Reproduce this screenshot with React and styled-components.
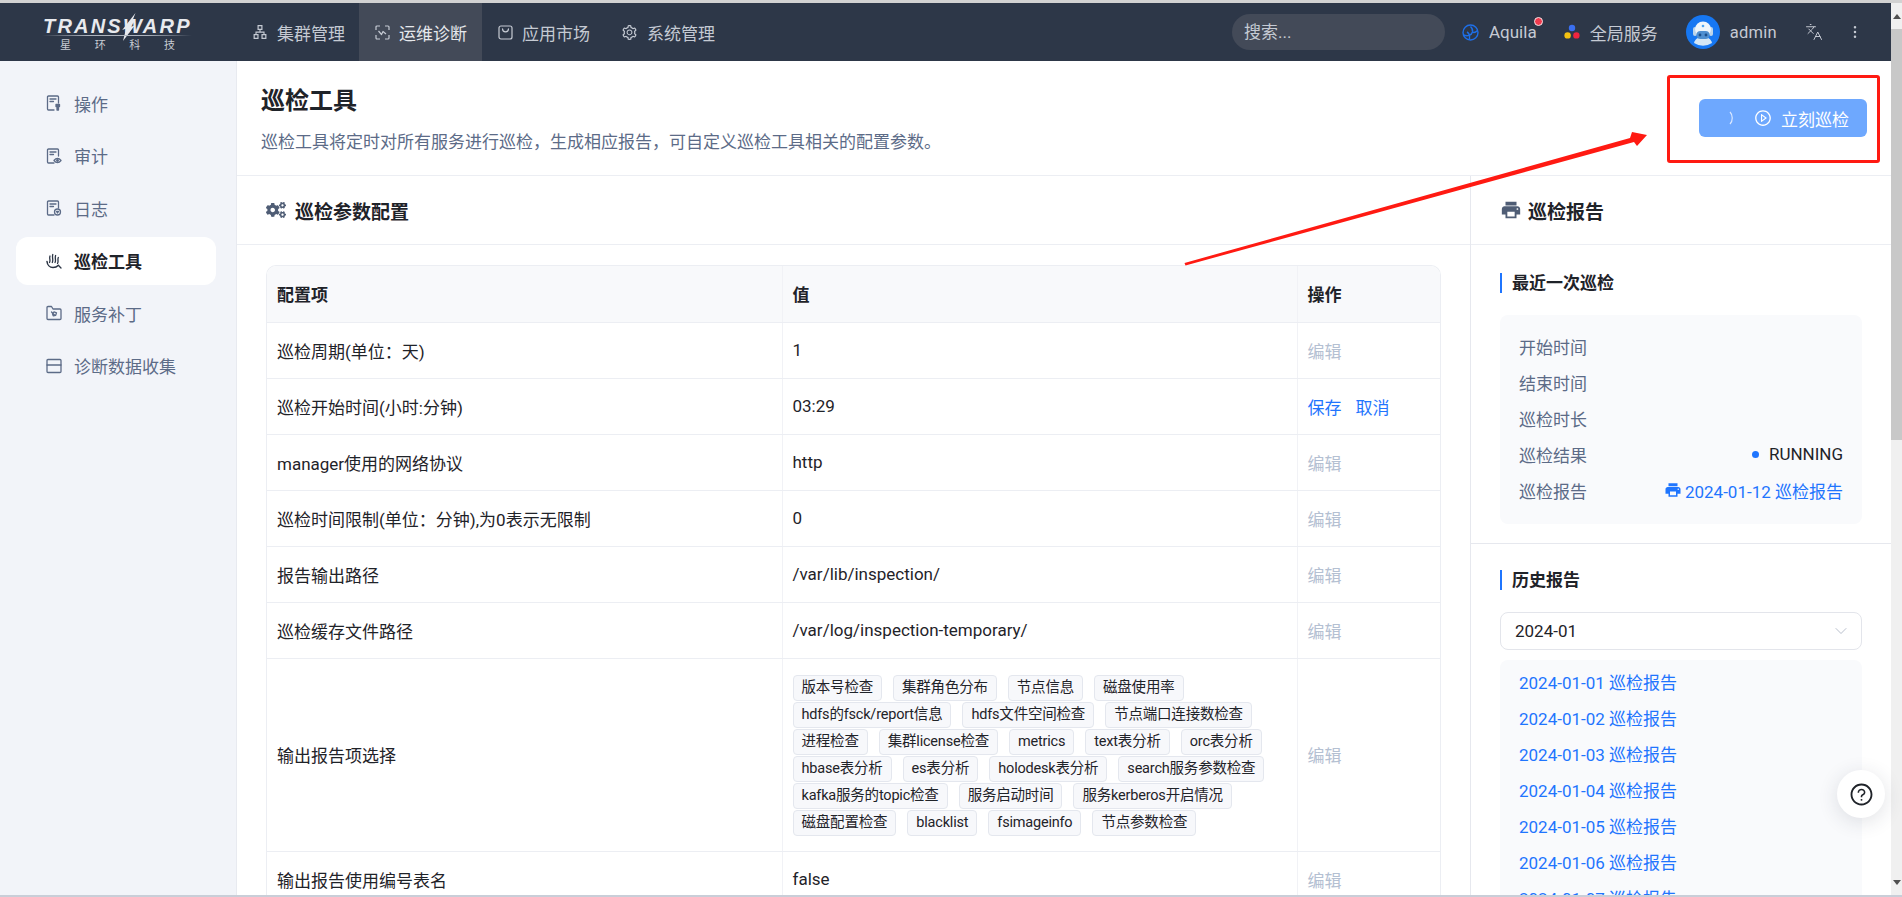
import styled, { createGlobalStyle } from 'styled-components';
import { AiOutlineApartment, AiOutlineSetting, AiOutlinePlayCircle, AiOutlineQuestionCircle } from 'react-icons/ai';
import { FaCogs } from 'react-icons/fa';
import { MdLocalPrintshop } from 'react-icons/md';
import { ChevronDown, Languages, EllipsisVertical } from 'lucide-react';

const BLUE = '#1f75fe';

const GlobalStyle = createGlobalStyle`
    html, body {
        margin: 0;
        padding: 0;
        height: 897px;
        overflow: hidden;
        background: #fff;
    }
    * {
        box-sizing: border-box;
    }
    body {
        font-family: Roboto, "Noto Sans CJK SC", sans-serif;
        font-size: 17px;
        color: #1f2329;
    }
`;

const sideItems = [
    { label: '操作', icon: 'key' },
    { label: '审计', icon: 'eye' },
    { label: '日志', icon: 'shield' },
    { label: '巡检工具', icon: 'hand', active: true },
    { label: '服务补丁', icon: 'folder' },
    { label: '诊断数据收集', icon: 'box' },
];

const configRows = [
    { name: '巡检周期(单位：天)', value: '1' },
    { name: '巡检开始时间(小时:分钟)', value: '03:29', editing: true },
    { name: 'manager使用的网络协议', value: 'http' },
    { name: '巡检时间限制(单位：分钟),为0表示无限制', value: '0' },
    { name: '报告输出路径', value: '/var/lib/inspection/' },
    { name: '巡检缓存文件路径', value: '/var/log/inspection-temporary/' },
    {
        name: '输出报告项选择',
        tags: [
            '版本号检查', '集群角色分布', '节点信息', '磁盘使用率',
            'hdfs的fsck/report信息', 'hdfs文件空间检查', '节点端口连接数检查',
            '进程检查', '集群license检查', 'metrics', 'text表分析', 'orc表分析',
            'hbase表分析', 'es表分析', 'holodesk表分析', 'search服务参数检查',
            'kafka服务的topic检查', '服务启动时间', '服务kerberos开启情况',
            '磁盘配置检查', 'blacklist', 'fsimageinfo', '节点参数检查',
        ],
    },
    { name: '输出报告使用编号表名', value: 'false' },
];

const lastRun = [
    { label: '开始时间' },
    { label: '结束时间' },
    { label: '巡检时长' },
    { label: '巡检结果', status: 'RUNNING' },
    { label: '巡检报告', link: '2024-01-12 巡检报告' },
];

const history = ['01', '02', '03', '04', '05', '06', '07'];

const SideIcon = ({ type, color }) => {
    const common = { fill: 'none', stroke: color, strokeWidth: 1.3, strokeLinecap: 'round', strokeLinejoin: 'round' };
    if (type === 'hand') {
        return (
            <svg width="16" height="16" viewBox="0 0 16 16" {...common}>
                <path d="M1 8.500c.3 3.500 2.800 6 6 6 2.200 0 4-.8 5.500-2.300" strokeWidth="1.500" />
                <path d="M3.500 9.500C4.800 7 3 5.500 4 3M6.300 9.500C7.600 6.500 5.800 4.500 6.800 1.500M9 9.500C10.300 7 8.600 5 9.600 2.500M11.500 10.500C12.800 8.500 11.300 6.500 12.300 4.500" />
                <path d="M13 13l2 2" />
            </svg>
        );
    }
    if (type === 'folder') {
        return (
            <svg width="16" height="16" viewBox="0 0 16 16" {...common}>
                <path d="M1 2.500a1 1 0 0 1 1-1h3.500L7 4h7a1 1 0 0 1 1 1v8.500a1 1 0 0 1-1 1H2a1 1 0 0 1-1-1z" />
                <path d="M5.500 7l3.500 3.500M8 6.800l2.500 1-.8 2.500-2.500.5-.7-2z" />
            </svg>
        );
    }
    if (type === 'box') {
        return (
            <svg width="16" height="16" viewBox="0 0 16 16" {...common}>
                <path d="M1 7h14v6.500a1 1 0 0 1-1 1H2a1 1 0 0 1-1-1z" />
                <path d="M1 7V2.500a1 1 0 0 1 1-1h12a1 1 0 0 1 1 1V7" />
            </svg>
        );
    }
    return (
        <svg width="16" height="16" viewBox="0 0 16 16" {...common}>
            <path d="M8 15H2.500A1 1 0 0 1 1.500 14V2a1 1 0 0 1 1-1h9a1 1 0 0 1 1 1v6" />
            <path d="M4 4h6M4 6.500h3.500" />
            {type === 'key' && <path d="M10 9.500h3.500v2h-1v3.500h-1.500v-3.500h-1z" fill={color} />}
            {type === 'eye' && (
                <>
                    <path d="M8 12.500c1.200-1.600 2.400-2.200 3.500-2.200s2.300.6 3.500 2.200c-1.200 1.600-2.400 2.200-3.500 2.200S9.200 14.100 8 12.500z" />
                    <circle cx="11.500" cy="12.500" r="0.800" fill={color} />
                </>
            )}
            {type === 'shield' && (
                <>
                    <circle cx="11.500" cy="12" r="3" />
                    <path d="M10.500 11.500h2l-1 1.500z" />
                </>
            )}
        </svg>
    );
};

const DiagnoseIcon = () => (
    <svg width="15" height="15" viewBox="0 0 15 15" fill="none" stroke="#c5cad3" strokeWidth="1.200" strokeLinejoin="round">
        <path d="M1 5V2a1 1 0 0 1 1-1h3M10 1h3a1 1 0 0 1 1 1v3M14 10v3a1 1 0 0 1-1 1h-3M5 14H2a1 1 0 0 1-1-1v-3" />
        <path d="M3.500 6l3 3.500 1.500-3 3 2.500" />
    </svg>
);

const MarketIcon = () => (
    <svg width="15" height="15" viewBox="0 0 15 15" fill="none" stroke="#c5cad3" strokeWidth="1.200" strokeLinecap="round">
        <rect x="1" y="1" width="13" height="13" rx="2" />
        <path d="M4.500 3.800c0 4 6 4 6 0" />
    </svg>
);

const AquilaIcon = () => (
    <svg width="17" height="17" viewBox="0 0 17 17" fill="none" stroke="#1e6fe8" strokeWidth="1.400">
        <circle cx="8.500" cy="8.500" r="7.500" />
        <path d="M1.500 11c4 1.500 8 .5 9-3 .5-2-.5-4-2-5.500" />
        <path d="M5 8c2 1 3 3 2.500 7M10.500 8c1.500 1 3.500 0 5-1.500" />
    </svg>
);

const ServiceDots = () => (
    <svg width="16" height="16" viewBox="0 0 16 16">
        <circle cx="8" cy="4" r="3.200" fill="#3a6ff0" />
        <circle cx="3.600" cy="11.400" r="3.200" fill="#f5c211" />
        <circle cx="12.400" cy="11.400" r="3.200" fill="#f0243f" />
    </svg>
);

const RobotAvatar = () => (
    <svg width="34" height="34" viewBox="0 0 34 34">
        <circle cx="17" cy="17" r="17" fill="#1677f2" />
        <path d="M8 28c1-4 4-6 9-6s8 2 9 6a17 17 0 0 1-18 0z" fill="#d4e6f5" />
        <rect x="7" y="12" width="4" height="9" rx="2" fill="#bcd5ea" />
        <rect x="23" y="12" width="4" height="9" rx="2" fill="#bcd5ea" />
        <ellipse cx="17" cy="14" rx="8" ry="7.500" fill="#eef5fb" />
        <rect x="10.500" y="16" width="13" height="8" rx="4" fill="#4f8fd0" />
        <circle cx="14" cy="20" r="1.400" fill="#1c4f8c" />
        <circle cx="20" cy="20" r="1.400" fill="#1c4f8c" />
        <circle cx="17" cy="11" r="1.300" fill="#4aa3f0" />
    </svg>
);

const App = () => (
    <Root>
        <GlobalStyle />
        <TopEdge />
        <Frame>
            <Page>
                <Header>
                    <Logo>
                        <LogoWord>TRANSWARP</LogoWord>
                        <LogoBolt viewBox="0 0 24 36" width="20" height="28">
                            <path d="M19 0L12 18l6-2L3 36l4-16-5 2z" fill="#e8eaee" />
                        </LogoBolt>
                        <LogoLine />
                        <LogoCn>
                            <span>星</span>
                            <span>环</span>
                            <span>科</span>
                            <span>技</span>
                        </LogoCn>
                    </Logo>
                    <NavList>
                        <NavItem>
                            <AiOutlineApartment size={16} />
                            集群管理
                        </NavItem>
                        <NavItem $active>
                            <DiagnoseIcon />
                            运维诊断
                        </NavItem>
                        <NavItem>
                            <MarketIcon />
                            应用市场
                        </NavItem>
                        <NavItem>
                            <AiOutlineSetting size={17} />
                            系统管理
                        </NavItem>
                    </NavList>
                    <HeaderRight>
                        <SearchBox>搜索...</SearchBox>
                        <HeaderLink $ml={17}>
                            <AquilaIcon />
                            <BadgeWrap>
                                Aquila
                                <RedDot />
                            </BadgeWrap>
                        </HeaderLink>
                        <HeaderLink $ml={27}>
                            <ServiceDots />
                            全局服务
                        </HeaderLink>
                        <HeaderLink $ml={28}>
                            <RobotAvatar />
                            <UserName>admin</UserName>
                        </HeaderLink>
                        <IconSlot $ml={28}>
                            <Languages size={18} strokeWidth={1.300} />
                        </IconSlot>
                        <IconSlot $ml={24}>
                            <EllipsisVertical size={16} strokeWidth={1.800} />
                        </IconSlot>
                    </HeaderRight>
                </Header>
                <Body>
                    <Sidebar>
                        {sideItems.map((item) => (
                            <SideItem key={item.label} $active={item.active}>
                                <SideIcon type={item.icon} color={item.active ? '#2b3444' : '#5c6b87'} />
                                {item.label}
                            </SideItem>
                        ))}
                    </Sidebar>
                    <Main>
                        <TitleBar>
                            <TitleText>
                                <PageTitle>巡检工具</PageTitle>
                                <PageDesc>巡检工具将定时对所有服务进行巡检，生成相应报告，可自定义巡检工具相关的配置参数。</PageDesc>
                            </TitleText>
                            <RunButton>
                                <svg width="8" height="14" viewBox="0 0 8 14" fill="none" stroke="#dbe8ff" strokeWidth="1.200">
                                    <path d="M2 1c3 3 3 9 0 12" />
                                </svg>
                                <AiOutlinePlayCircle size={18} />
                                立刻巡检
                            </RunButton>
                        </TitleBar>
                        <Columns>
                            <LeftCol>
                                <PanelHead $pad={29} $gap={9}>
                                    <FaCogs size={20} color="#4f5d75" />
                                    巡检参数配置
                                </PanelHead>
                                <TableArea>
                                    <TableBox>
                                        <ConfigTable>
                                            <colgroup>
                                                <col width="515" />
                                                <col width="515" />
                                                <col width="144" />
                                            </colgroup>
                                            <thead>
                                                <tr>
                                                    <th>配置项</th>
                                                    <th>值</th>
                                                    <th>操作</th>
                                                </tr>
                                            </thead>
                                            <tbody>
                                                {configRows.map((row) => (
                                                    <tr key={row.name}>
                                                        <td>{row.name}</td>
                                                        <td>
                                                            {row.tags ? (
                                                                <TagList>
                                                                    {row.tags.map((tag) => (
                                                                        <Tag key={tag}>{tag}</Tag>
                                                                    ))}
                                                                </TagList>
                                                            ) : (
                                                                row.value
                                                            )}
                                                        </td>
                                                        <td>
                                                            {row.editing ? (
                                                                <ActionRow>
                                                                    <LinkText>保存</LinkText>
                                                                    <LinkText>取消</LinkText>
                                                                </ActionRow>
                                                            ) : (
                                                                <DisabledText>编辑</DisabledText>
                                                            )}
                                                        </td>
                                                    </tr>
                                                ))}
                                            </tbody>
                                        </ConfigTable>
                                    </TableBox>
                                </TableArea>
                            </LeftCol>
                            <RightCol>
                                <PanelHead $pad={29} $gap={6}>
                                    <MdLocalPrintshop size={22} color="#4f5d75" />
                                    巡检报告
                                </PanelHead>
                                <ReportSection>
                                    <SectionTitle>最近一次巡检</SectionTitle>
                                    <InfoBox>
                                        {lastRun.map((row) => (
                                            <InfoRow key={row.label}>
                                                <InfoLabel>{row.label}</InfoLabel>
                                                {row.status && (
                                                    <StatusText>
                                                        <StatusDot />
                                                        {row.status}
                                                    </StatusText>
                                                )}
                                                {row.link && (
                                                    <ReportLink>
                                                        <MdLocalPrintshop size={18} />
                                                        {row.link}
                                                    </ReportLink>
                                                )}
                                            </InfoRow>
                                        ))}
                                    </InfoBox>
                                </ReportSection>
                                <HistorySection>
                                    <SectionTitle>历史报告</SectionTitle>
                                    <MonthSelect>
                                        2024-01
                                        <ChevronDown size={20} strokeWidth={1} color="#aab2c2" />
                                    </MonthSelect>
                                    <HistoryBox>
                                        {history.map((day) => (
                                            <HistoryRow key={day}>2024-01-{day} 巡检报告</HistoryRow>
                                        ))}
                                    </HistoryBox>
                                </HistorySection>
                            </RightCol>
                        </Columns>
                    </Main>
                </Body>
            </Page>
            <ScrollBar>
                <ScrollArrow $up />
                <ScrollThumb />
                <ScrollArrow />
            </ScrollBar>
        </Frame>
        <BottomEdge />
        <HelpButton>
            <AiOutlineQuestionCircle size={25} />
        </HelpButton>
        <RedBox />
        <ArrowLayer viewBox="0 0 1902 897" width="1902" height="897">
            <polygon points="1184.500,263 1630,138 1632,132 1647,135 1637,146 1634,142 1185.500,265.500" fill="#ff1a12" />
        </ArrowLayer>
    </Root>
);

export default App;

const Root = styled.div`
    position: relative;
    width: 1902px;
    height: 897px;
    overflow: hidden;
    display: flex;
    flex-direction: column;
`;

const TopEdge = styled.div`
    height: 3px;
    flex: none;
    background: #d2d2d2;
`;

const BottomEdge = styled.div`
    height: 2px;
    flex: none;
    background: #c9ced8;
`;

const Frame = styled.div`
    flex: 1;
    min-height: 0;
    display: flex;
`;

const Page = styled.div`
    width: 1891px;
    display: flex;
    flex-direction: column;
    overflow: hidden;
`;

const Header = styled.header`
    height: 58px;
    flex: none;
    display: flex;
    background: #2d3748;
    color: #c5cad3;
`;

const Logo = styled.div`
    position: relative;
    width: 236px;
    flex: none;
    color: #e8eaee;
`;

const LogoWord = styled.div`
    position: absolute;
    left: 43px;
    top: 11px;
    font-family: "Liberation Sans", sans-serif;
    font-size: 20px;
    line-height: 24px;
    font-weight: 700;
    font-style: italic;
    letter-spacing: 2.200px;
    white-space: nowrap;
`;

const LogoBolt = styled.svg`
    position: absolute;
    left: 120px;
    top: 10px;
`;

const LogoLine = styled.div`
    position: absolute;
    left: 42px;
    top: 32px;
    width: 150px;
    height: 1px;
    background: linear-gradient(90deg, transparent, #aeb4be 30%, #aeb4be 70%, transparent);
`;

const LogoCn = styled.div`
    position: absolute;
    left: 60px;
    top: 36px;
    width: 115px;
    display: flex;
    justify-content: space-between;
    font-size: 11px;
    line-height: 14px;
    color: #c8ccd3;
`;

const NavList = styled.nav`
    display: flex;
`;

const NavItem = styled.div`
    width: 123px;
    display: flex;
    align-items: center;
    gap: 9px;
    padding-left: 16px;
    background: ${(p) => (p.$active ? '#434a58' : 'transparent')};
    color: ${(p) => (p.$active ? '#e6e8ec' : '#c5cad3')};
    white-space: nowrap;
`;

const HeaderRight = styled.div`
    display: flex;
    align-items: center;
    margin-left: auto;
    width: 659px;
`;

const SearchBox = styled.div`
    width: 213px;
    height: 36px;
    border-radius: 18px;
    background: #434a58;
    padding-left: 12px;
    line-height: 36px;
    color: #c5cad3;
`;

const HeaderLink = styled.div`
    display: flex;
    align-items: center;
    gap: 10px;
    margin-left: ${(p) => p.$ml}px;
    white-space: nowrap;
`;

const BadgeWrap = styled.span`
    position: relative;
    font-size: 17px;
`;

const RedDot = styled.span`
    position: absolute;
    right: -6px;
    top: -5px;
    width: 9px;
    height: 9px;
    border-radius: 50%;
    background: #f03a4e;
    border: 1px solid #f5e6e8;
`;

const UserName = styled.span`
    font-size: 16.500px;
    letter-spacing: 0.300px;
`;

const IconSlot = styled.div`
    display: flex;
    margin-left: ${(p) => p.$ml}px;
`;

const Body = styled.div`
    flex: 1;
    min-height: 0;
    display: flex;
`;

const Sidebar = styled.aside`
    width: 237px;
    flex: none;
    padding: 18px 20px 0 16px;
    background: #f2f4f9;
    border-right: 1px solid #e8eaf0;
    display: flex;
    flex-direction: column;
    gap: 4.600px;
`;

const SideItem = styled.div`
    height: 48px;
    display: flex;
    align-items: center;
    gap: 12px;
    padding-left: 30px;
    border-radius: 12px;
    background: ${(p) => (p.$active ? '#fff' : 'transparent')};
    color: ${(p) => (p.$active ? '#1f2329' : '#5c6b87')};
    font-weight: ${(p) => (p.$active ? 700 : 400)};
`;

const Main = styled.main`
    flex: 1;
    min-width: 0;
    display: flex;
    flex-direction: column;
`;

const TitleBar = styled.div`
    height: 115px;
    flex: none;
    display: flex;
    align-items: center;
    justify-content: space-between;
    padding: 0 24px;
    border-bottom: 1px solid #eceef3;
`;

const TitleText = styled.div`
    padding-top: 3px;
`;

const PageTitle = styled.h1`
    margin: 0 0 12px;
    font-size: 24px;
    line-height: 32px;
    font-weight: 700;
`;

const PageDesc = styled.p`
    margin: 0;
    font-size: 17px;
    line-height: 26px;
    color: #5c6b87;
`;

const RunButton = styled.div`
    width: 168px;
    height: 38px;
    display: flex;
    align-items: center;
    justify-content: flex-end;
    gap: 9px;
    padding-right: 18px;
    border-radius: 6px;
    background: #6ea8fe;
    color: #fff;
    white-space: nowrap;
    svg:first-child {
        margin-right: 9px;
    }
`;

const Columns = styled.div`
    flex: 1;
    min-height: 0;
    display: flex;
`;

const LeftCol = styled.section`
    width: 1233px;
    flex: none;
    overflow: hidden;
`;

const RightCol = styled.section`
    flex: 1;
    min-width: 0;
    border-left: 1px solid #e6e8ee;
    overflow: hidden;
`;

const PanelHead = styled.div`
    height: 69px;
    display: flex;
    align-items: center;
    gap: ${(p) => p.$gap}px;
    padding-left: ${(p) => p.$pad}px;
    border-bottom: 1px solid #eceef3;
    font-size: 19px;
    font-weight: 700;
`;

const TableArea = styled.div`
    padding: 20px 0 0 29px;
`;

const TableBox = styled.div`
    width: 1175px;
    border: 1px solid #eceef3;
    border-bottom: none;
    border-radius: 10px 10px 0 0;
    overflow: hidden;
`;

const ConfigTable = styled.table`
    width: 100%;
    table-layout: fixed;
    border-collapse: collapse;
    th,
    td {
        height: 56px;
        padding: 0 10px;
        text-align: left;
        font-size: 17px;
        border-bottom: 1px solid #eceef3;
    }
    th + th,
    td + td {
        border-left: 1px solid #f1f2f6;
    }
    th {
        font-weight: 700;
        background: #f8f9fb;
    }
`;

const TagList = styled.div`
    display: flex;
    flex-wrap: wrap;
    column-gap: 11px;
    row-gap: 1px;
    padding: 16px 0 15px;
`;

const Tag = styled.span`
    height: 26px;
    padding: 0 8px;
    border: 1px solid #e4e7ee;
    border-radius: 4px;
    background: #f7f8fb;
    font-size: 14.500px;
    line-height: 24px;
    letter-spacing: -0.200px;
    white-space: nowrap;
`;

const ActionRow = styled.div`
    display: flex;
    gap: 14px;
`;

const LinkText = styled.span`
    color: ${BLUE};
`;

const DisabledText = styled.span`
    color: #b4c0d2;
`;

const ReportSection = styled.div`
    padding: 28px 29px 19px;
    border-bottom: 1px solid #e6e8ee;
`;

const HistorySection = styled.div`
    padding: 26px 29px 0;
`;

const SectionTitle = styled.h3`
    margin: 0 0 22px;
    padding-left: 10px;
    height: 20px;
    border-left: 2px solid ${BLUE};
    font-size: 17px;
    line-height: 20px;
    font-weight: 700;
`;

const InfoBox = styled.div`
    height: 209px;
    padding: 13px 19px;
    border-radius: 8px;
    background: #f9fafc;
`;

const InfoRow = styled.div`
    height: 36px;
    display: flex;
    align-items: center;
    justify-content: space-between;
`;

const InfoLabel = styled.span`
    color: #5c6b87;
`;

const StatusText = styled.span`
    display: flex;
    align-items: center;
    gap: 10px;
    font-size: 17px;
`;

const StatusDot = styled.i`
    width: 7px;
    height: 7px;
    border-radius: 50%;
    background: ${BLUE};
`;

const ReportLink = styled.span`
    display: flex;
    align-items: center;
    gap: 3px;
    color: ${BLUE};
`;

const MonthSelect = styled.div`
    height: 38px;
    display: flex;
    align-items: center;
    justify-content: space-between;
    padding: 0 10px 0 14px;
    border: 1px solid #e3e5eb;
    border-radius: 8px;
`;

const HistoryBox = styled.div`
    margin-top: 10px;
    padding: 5px 19px 0;
    border-radius: 8px;
    background: #f9fafc;
`;

const HistoryRow = styled.div`
    height: 36px;
    line-height: 36px;
    color: ${BLUE};
`;

const ScrollBar = styled.div`
    width: 11px;
    flex: none;
    display: flex;
    flex-direction: column;
    background: #f0f0f0;
`;

const ScrollArrow = styled.div`
    height: 26px;
    flex: none;
    display: flex;
    align-items: center;
    justify-content: center;
    &::after {
        content: '';
        border-left: 4px solid transparent;
        border-right: 4px solid transparent;
        ${(p) => (p.$up ? 'border-bottom: 5px solid #505050;' : 'border-top: 5px solid #505050;')}
    }
`;

const ScrollThumb = styled.div`
    height: 411px;
    flex: none;
    margin-bottom: auto;
    background: #c8c8c8;
`;

const HelpButton = styled.div`
    position: absolute;
    left: 1837px;
    top: 770px;
    width: 48px;
    height: 48px;
    display: flex;
    align-items: center;
    justify-content: center;
    border-radius: 50%;
    background: #fff;
    box-shadow: 0 4px 20px rgba(40, 50, 70, 0.14);
    color: #1f2329;
`;

const RedBox = styled.div`
    position: absolute;
    left: 1667px;
    top: 75px;
    width: 213px;
    height: 88px;
    border: 3px solid #ff1a12;
    border-radius: 3px;
    pointer-events: none;
`;

const ArrowLayer = styled.svg`
    position: absolute;
    left: 0;
    top: 0;
    pointer-events: none;
`;
